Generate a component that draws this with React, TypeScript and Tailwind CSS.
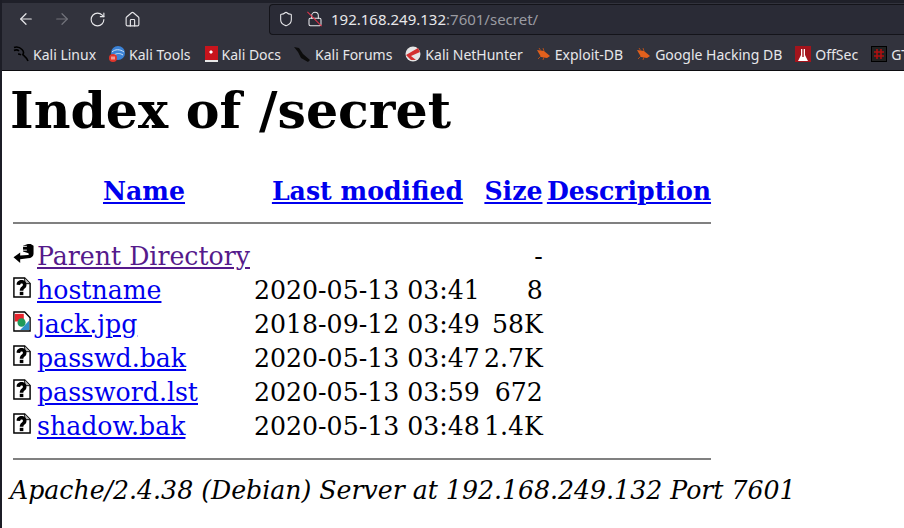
// Firefox on Kali showing an Apache directory listing.
import { ArrowLeft, ArrowRight, RotateCw, Home, Shield, Lock } from 'lucide-react'

type Entry = { name: string; date: string; size: string; icon: 'unknown' | 'image' }

const ENTRIES: Entry[] = [
  { name: 'hostname', date: '2020-05-13 03:41', size: '8', icon: 'unknown' },
  { name: 'jack.jpg', date: '2018-09-12 03:49', size: '58K', icon: 'image' },
  { name: 'passwd.bak', date: '2020-05-13 03:47', size: '2.7K', icon: 'unknown' },
  { name: 'password.lst', date: '2020-05-13 03:59', size: '672', icon: 'unknown' },
  { name: 'shadow.bak', date: '2020-05-13 03:48', size: '1.4K', icon: 'unknown' },
]

function KaliDragon() {
  return (
    <svg width="16" height="16" viewBox="0 0 16 16" fill="none" stroke="#000" strokeWidth="1.6">
      <path d="M1 1.500c3-1 6 0 8 2s2 3 1 4.500c-1 1 3 2 5 7" />
      <path d="M1 4.500c2-1 4-.5 5 .5M5 8c1 0 2 0 3 1" />
    </svg>
  )
}

function ToolsIcon() {
  return (
    <svg width="16" height="16" viewBox="0 0 16 16">
      <circle cx="9" cy="7" r="7" fill="#3b82d6" />
      <path d="M3 6c3-3 8-3 12 0M5 9c3-2 6-2 9 0" stroke="#cfe4fa" fill="none" />
      <circle cx="4" cy="12" r="4" fill="#e0352b" />
      <path d="M3 10.500v3M5 10.500v3" stroke="#fff" />
    </svg>
  )
}

function DocsIcon() {
  return (
    <svg width="14" height="16" viewBox="0 0 14 16">
      <rect x="1" y="0" width="13" height="14" fill="#c8141c" />
      <rect x="1" y="14" width="13" height="2" fill="#e8e8e8" />
      <path d="M5 6l2-2 2 2-2 2z" fill="#fff" />
    </svg>
  )
}

function ForumsIcon() {
  return (
    <svg width="17" height="16" viewBox="0 0 17 16" fill="#0c0c0c">
      <path d="M0 1l5 1 4 6 7 6-2 2-7-4-3-6z" />
    </svg>
  )
}

function HunterIcon() {
  return (
    <svg width="16" height="16" viewBox="0 0 16 16">
      <circle cx="8" cy="8" r="7.500" fill="#e5e5e5" />
      <path d="M1 9L13 2l2 4-9 4 5 4H6z" fill="#d32f2f" />
    </svg>
  )
}

function BugIcon() {
  return (
    <svg width="15" height="12" viewBox="0 0 15 12">
      <path d="M1 2l7 1 6 5-3 2-6-1z" fill="#e2601c" />
      <path d="M3 0l2 3M7 0l1 3M2 11l3-3M7 12l1-3" stroke="#b34d18" />
    </svg>
  )
}

function OffSecIcon() {
  return (
    <svg width="16" height="16" viewBox="0 0 16 16">
      <rect width="16" height="16" fill="#a3141c" />
      <path d="M6 3h4v6l3 6H3l3-6z" fill="#fff" />
      <path d="M7.300 3h1.400v8H7.300z" fill="#a3141c" />
    </svg>
  )
}

function GtfoIcon() {
  return (
    <svg width="16" height="16" viewBox="0 0 16 16">
      <rect x="0.500" y="0.500" width="15" height="15" fill="#222" stroke="#000" />
      <path d="M6 3v10M10 3v10M3 6h10M3 10h10" stroke="#b01010" strokeWidth="1.600" />
    </svg>
  )
}

const BOOKMARKS = [
  { label: 'Kali Linux', icon: <KaliDragon /> },
  { label: 'Kali Tools', icon: <ToolsIcon /> },
  { label: 'Kali Docs', icon: <DocsIcon /> },
  { label: 'Kali Forums', icon: <ForumsIcon /> },
  { label: 'Kali NetHunter', icon: <HunterIcon /> },
  { label: 'Exploit-DB', icon: <BugIcon /> },
  { label: 'Google Hacking DB', icon: <BugIcon /> },
  { label: 'OffSec', icon: <OffSecIcon /> },
  { label: 'GTFOBins', icon: <GtfoIcon /> },
]

function UnknownIcon() {
  return (
    <svg width="18" height="21" viewBox="0 0 20 22" preserveAspectRatio="none">
      <path d="M1 1h12l6 6v14H1z" fill="#fff" stroke="#000" strokeWidth="1.600" />
      <path d="M13 1v6h6" fill="#bbb" stroke="#000" />
      <path d="M4 8c0-6.500 11-6.500 11 0 0 4-3.500 3.500-3.500 6.500h-4c0-4.500 3.500-4.500 3.500-6.500 0-1.500-3-1.500-3 .5z" fill="#000" />
      <rect x="7.500" y="15.500" width="4" height="3.500" fill="#000" />
    </svg>
  )
}

function ImageIcon() {
  return (
    <svg width="18" height="21" viewBox="0 0 20 22" preserveAspectRatio="none">
      <path d="M1 1h12l6 6v14H1z" fill="#fff" stroke="#000" strokeWidth="1.500" />
      <rect x="2" y="3" width="10" height="8" fill="#e8242c" />
      <path d="M18 10v10H8z" fill="#2f8fc8" />
      <circle cx="9.500" cy="12" r="4.500" fill="#1f9a58" />
    </svg>
  )
}

function ParentIcon() {
  return (
    <svg width="22" height="21" viewBox="0 0 22 22" fill="#000" className="-mr-[1px]">
      <path d="M0 15l7-5v3l8-.5c1.500 0 1.500-1.500 0-2L10 9V3l5-2h3l3 2v8c0 3-2 5-6 5l-8 1v4z" />
      <path d="M10 3.500h4M10 7.500h4" stroke="#fff" strokeWidth="1" />
    </svg>
  )
}

export default function App() {
  return (
    <div className="h-[528px] w-[904px] overflow-hidden border-l-2 border-[#1c1d26] bg-white">
      <div className="-ml-[2px] bg-[#32333d] border-b border-[#0c0c10]">
        <div className="flex h-[35px] items-center border-t-[3px] border-[#1f2029] text-[#e7e7ea]">
          <div className="flex items-center pl-[17px]">
            <ArrowLeft className="h-[18px] w-[18px]" strokeWidth={1.6} />
            <ArrowRight className="ml-[18px] h-[18px] w-[18px] text-[#72737b]" strokeWidth={1.6} />
            <RotateCw className="ml-[18px] h-[17px] w-[17px]" strokeWidth={1.6} />
            <Home className="ml-[18px] h-[17px] w-[17px]" strokeWidth={1.6} />
          </div>
          <div className="ml-[128px] flex h-[31px] flex-1 items-center rounded-l-[4px] border border-r-0 border-[#14141a] bg-[#2a2b36] pl-2 font-['Noto_Sans',sans-serif] text-[15px]">
            <Shield className="h-4 w-4" strokeWidth={1.6} />
            <span className="relative ml-[13px] flex">
              <Lock className="h-4 w-4" strokeWidth={1.6} />
              <span className="absolute left-[7px] top-[-2px] h-5 w-px -rotate-45 bg-[#e5334b]" />
            </span>
            <span className="ml-[8px]">192.168.249.132<span className="text-[#9a9ba2]">:7601/secret/</span></span>
          </div>
        </div>
        <div className="flex h-[35px] items-center gap-[13px] overflow-hidden whitespace-nowrap pl-[13px] pt-[3px] font-['Noto_Sans',sans-serif] text-[14px] text-[#e7e7ea]">
          {BOOKMARKS.map((b) => (
            <div key={b.label} className="flex shrink-0 items-center gap-[4px]">
              {b.icon}
              <span>{b.label}</span>
            </div>
          ))}
        </div>
      </div>

      <div className="pl-[8px] font-['DejaVu_Serif',serif] text-[25.2px] leading-[29px] text-black">
        <h1 className="pt-[9px] text-[50.6px] font-bold leading-[60px]">Index of /secret</h1>
        <table className="mt-[33px] border-separate border-spacing-x-[3px] border-spacing-y-0">
          <tbody>
            <tr className="h-[34px]">
              <th className="w-[21px]" />
              <th className="w-[214px] pt-[2px] text-center font-bold text-[#0000ee] underline">Name</th>
              <th className="w-[227px] pt-[2px] text-center font-bold text-[#0000ee] underline">Last modified</th>
              <th className="w-[58px] pt-[2px] text-center font-bold text-[#0000ee] underline">Size</th>
              <th className="pl-px pt-[2px] text-center font-bold text-[#0000ee] underline">Description</th>
            </tr>
            <tr><td colSpan={5} className="h-[32px]"><div className="border-t-2 border-[#808080]" /></td></tr>
            <tr className="h-[34px]">
              <td className="pb-[6px]"><ParentIcon /></td>
              <td className="text-[#551a8b] underline">Parent Directory</td>
              <td />
              <td className="text-right">-</td>
              <td />
            </tr>
            {ENTRIES.map((e) => (
              <tr key={e.name} className="h-[34px]">
                <td className="pb-[6px]">{e.icon === 'image' ? <ImageIcon /> : <UnknownIcon />}</td>
                <td className="text-[#0000ee] underline">{e.name}</td>
                <td>{e.date}</td>
                <td className="text-right">{e.size}</td>
                <td />
              </tr>
            ))}
            <tr><td colSpan={5} className="h-[32px]"><div className="border-t-2 border-[#808080]" /></td></tr>
          </tbody>
        </table>
        <address className="mt-px whitespace-nowrap italic">Apache/2.4.38 (Debian) Server at 192.168.249.132 Port 7601</address>
      </div>
    </div>
  )
}
